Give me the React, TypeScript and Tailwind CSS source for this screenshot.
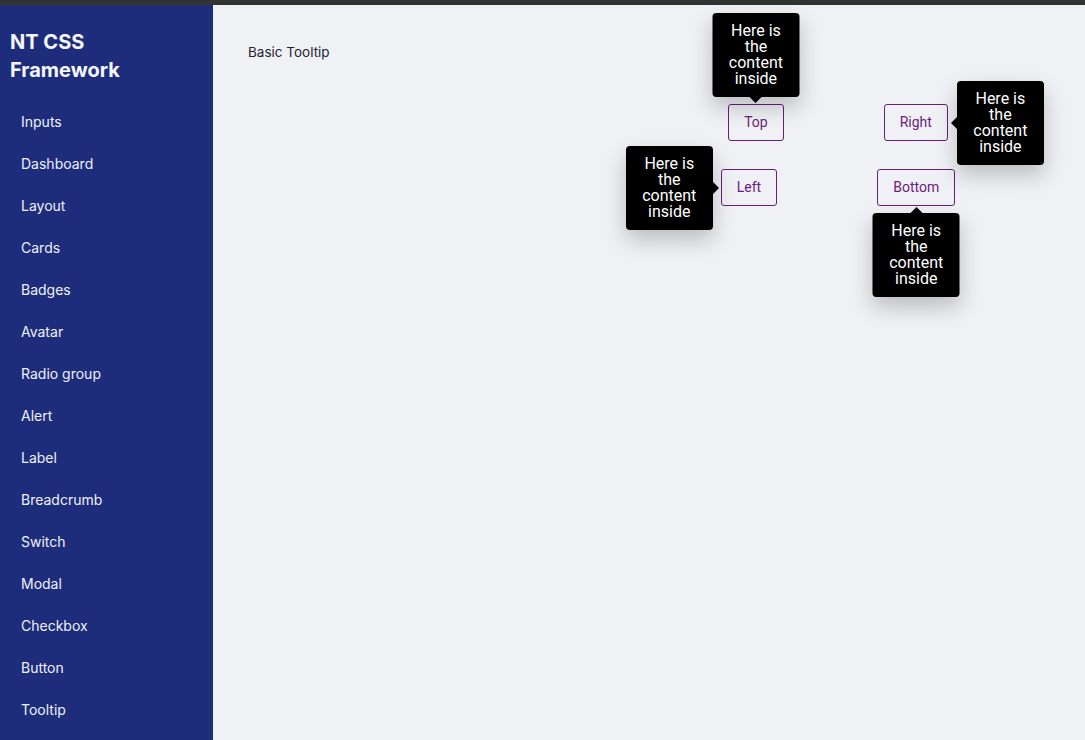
import React from 'react';

const navItems = [
  'Inputs', 'Dashboard', 'Layout', 'Cards', 'Badges', 'Avatar', 'Radio group',
  'Alert', 'Label', 'Breadcrumb', 'Switch', 'Modal', 'Checkbox', 'Button', 'Tooltip',
];

type Side = 'top' | 'right' | 'bottom' | 'left';

const tipPos: Record<Side, string> = {
  top: 'bottom-[calc(100%+7px)] left-1/2 -translate-x-1/2',
  bottom: 'top-[calc(100%+7px)] left-1/2 -translate-x-1/2',
  right: 'left-[calc(100%+9px)] top-1/2 -translate-y-1/2',
  left: 'right-[calc(100%+8px)] top-1/2 -translate-y-1/2',
};

const arrowPos: Record<Side, string> = {
  top: 'top-full left-1/2 -translate-x-1/2 border-x-[6px] border-t-[6px] border-x-transparent border-t-black',
  bottom: 'bottom-full left-1/2 -translate-x-1/2 border-x-[6px] border-b-[6px] border-x-transparent border-b-black',
  right: 'right-full top-1/2 -translate-y-1/2 border-y-[6px] border-r-[6px] border-y-transparent border-r-black',
  left: 'left-full top-1/2 -translate-y-1/2 border-y-[6px] border-l-[6px] border-y-transparent border-l-black',
};

const TooltipButton: React.FC<{ label: string; side: Side }> = ({ label, side }) => (
  <div className="relative">
    <button className="h-[37px] px-[15px] border border-[#6b1d7f] rounded-[3px] text-[14px] font-normal text-[#6b1d7f] bg-transparent font-['Roboto',sans-serif]">
      {label}
    </button>
    <div
      className={`absolute z-10 w-[87px] px-[14px] py-[10px] bg-black text-white text-center text-[16px] leading-[16px] rounded-[4px] shadow-[0_10px_22px_rgba(0,0,0,0.22)] font-['Roboto',sans-serif] ${tipPos[side]}`}
    >
      Here is the content inside
      <span className={`absolute w-0 h-0 ${arrowPos[side]}`}></span>
    </div>
  </div>
);

const App: React.FC = () => {
  return (
    <div className="h-screen flex flex-col overflow-hidden font-['Inter',sans-serif] bg-[#f0f1f5]">
      <div className="h-[5px] bg-[#333333] shrink-0"></div>
      <div className="flex flex-1 min-h-0">
        <aside className="w-[213px] shrink-0 bg-[#1e2d7b] text-white pt-[23px] px-[10px]">
          <h1 className="text-[20px] leading-[28px] font-bold text-[#f5f6fa]">NT CSS<br />Framework</h1>
          <nav className="mt-[17px]">
            {navItems.map(item => (
              <div key={item} className="px-[11px] py-[11px] text-[14px] leading-[20px] text-[#eef0f8]">
                {item}
              </div>
            ))}
          </nav>
        </aside>

        <main className="flex-1 pl-[35px] pt-[37px]">
          <p className="text-[13.5px] leading-[20px] text-[#1f2330]">Basic Tooltip</p>
          <div className="ml-[390px] w-[400px] mt-[42px] flex flex-col items-center gap-[28px]">
            <div className="flex gap-[100px]">
              <TooltipButton label="Top" side="top" />
              <TooltipButton label="Right" side="right" />
            </div>
            <div className="flex gap-[100px]">
              <TooltipButton label="Left" side="left" />
              <TooltipButton label="Bottom" side="bottom" />
            </div>
          </div>
        </main>
      </div>
    </div>
  );
};

export default App;
